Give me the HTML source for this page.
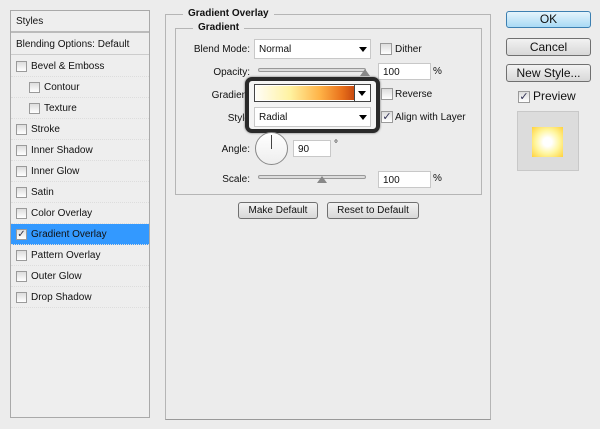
<!DOCTYPE html>
<html><head><style>
*{box-sizing:border-box}
body{margin:0;width:600px;height:429px;background:#ececec;font-family:"Liberation Sans",sans-serif;font-size:10px;color:#111;position:relative;overflow:hidden}
.a{position:absolute}
.lp{left:10px;top:10px;width:140px;height:408px;border:1px solid #a9a9a9;background:#eeeeee}
.row{position:absolute;left:0;width:138px;height:21px;border-bottom:1px dotted #ddd;line-height:21px;padding-left:20px}
.cb{position:absolute;width:11px;height:11px;border:1px solid #9a9a9a;background:linear-gradient(#ddd,#fff)}
.row .cb{left:5px;top:5px}
.sel{background:#3399ff}
.fs{border:1px solid #b5b5b5}
.inp{background:#fff;border:1px solid #c8c8c8;padding-left:4px;line-height:18px}
.btn{border:1px solid #707070;border-radius:3px;background:linear-gradient(#f2f2f2,#d8d8d8);text-align:center}
.tri{position:absolute;width:0;height:0;border-left:4px solid transparent;border-right:4px solid transparent;border-top:5px solid #000}
.lbl{position:absolute;text-align:right;width:80px}
.sl{position:absolute;height:4px;border:1px solid #999;border-radius:2px;background:#ddd}
</style></head><body>
<div class="a lp">
<div class="row" style="top:0;height:22px;padding-left:5px;border-bottom:2px solid #bbb">Styles</div>
<div class="row" style="top:23px;padding-left:5px;border-bottom:1px solid #ccc">Blending Options: Default</div>
<div class="row" style="top:45px"><span class="cb"></span>Bevel &amp; Emboss</div>
<div class="row" style="top:66px;padding-left:33px"><span class="cb" style="left:18px"></span>Contour</div>
<div class="row" style="top:87px;padding-left:33px"><span class="cb" style="left:18px"></span>Texture</div>
<div class="row" style="top:108px"><span class="cb"></span>Stroke</div>
<div class="row" style="top:129px"><span class="cb"></span>Inner Shadow</div>
<div class="row" style="top:150px"><span class="cb"></span>Inner Glow</div>
<div class="row" style="top:171px"><span class="cb"></span>Satin</div>
<div class="row" style="top:192px"><span class="cb"></span>Color Overlay</div>
<div class="row sel" style="top:213px"><span class="cb" style="font-size:10px;line-height:9px;text-align:center;color:#334">✓</span>Gradient Overlay</div>
<div class="row" style="top:234px"><span class="cb"></span>Pattern Overlay</div>
<div class="row" style="top:255px"><span class="cb"></span>Outer Glow</div>
<div class="row" style="top:276px"><span class="cb"></span>Drop Shadow</div>
</div>

<div class="a fs" style="left:165px;top:14px;width:326px;height:406px;border-bottom-color:#999"></div>
<div class="a" style="left:183px;top:8px;background:#ececec;padding:0 5px;font-weight:bold">Gradient Overlay</div>
<div class="a fs" style="left:175px;top:28px;width:307px;height:167px"></div>
<div class="a" style="left:193px;top:22px;background:#ececec;padding:0 5px;font-weight:bold">Gradient</div>

<div class="lbl" style="left:170px;top:44px">Blend Mode:</div>
<div class="a inp" style="left:254px;top:39px;width:117px;height:20px;line-height:19px">Normal</div>
<div class="tri" style="left:359px;top:47px"></div>
<div class="a cb" style="left:380px;top:43px;width:12px;height:12px"></div>
<div class="a" style="left:395px;top:44px">Dither</div>

<div class="lbl" style="left:170px;top:67px">Opacity:</div>
<div class="sl" style="left:258px;top:68px;width:108px"></div>
<div class="a" style="left:360px;top:69px;width:0;height:0;border-left:5px solid transparent;border-right:5px solid transparent;border-bottom:7px solid #888"></div>
<div class="a inp" style="left:378px;top:63px;width:53px;height:17px;line-height:17px">100</div>
<div class="a" style="left:433px;top:66px">%</div>

<div class="lbl" style="left:170px;top:90px">Gradient</div>
<div class="lbl" style="left:170px;top:113px">Style</div>
<div class="a" style="left:245px;top:77px;width:135px;height:56px;border:4px solid #2a2a2a;border-radius:7px;background:#f4f4f4;box-shadow:0 0 2px #666"></div>
<div class="a" style="left:254px;top:84px;width:117px;height:18px;border:1px solid #444;background:#fff"></div>
<div class="a" style="left:256px;top:86px;width:98px;height:14px;background:linear-gradient(90deg,#fffdf6,#fff2a0 35%,#ffb347 65%,#e8701a 88%,#c84a10)"></div>
<div class="a" style="left:354px;top:85px;width:1px;height:16px;background:#444"></div>
<div class="tri" style="left:358px;top:91px"></div>
<div class="a inp" style="left:254px;top:107px;width:117px;height:20px;line-height:20px">Radial</div>
<div class="tri" style="left:359px;top:115px"></div>

<div class="a cb" style="left:381px;top:88px;width:12px;height:12px"></div>
<div class="a" style="left:395px;top:89px">Reverse</div>
<div class="a cb" style="left:381px;top:111px;width:12px;height:12px;font-size:11px;line-height:10px;text-align:center;color:#335">✓</div>
<div class="a" style="left:395px;top:112px">Align with Layer</div>

<div class="lbl" style="left:170px;top:144px">Angle:</div>
<div class="a" style="left:255px;top:132px;width:33px;height:33px;border:1px solid #888;border-radius:50%;background:linear-gradient(#fff,#eee)"></div>
<div class="a" style="left:271px;top:135px;width:1px;height:14px;background:#444"></div>
<div class="a inp" style="left:293px;top:140px;width:38px;height:17px;line-height:17px">90</div>
<div class="a" style="left:334px;top:139px">°</div>

<div class="lbl" style="left:170px;top:174px">Scale:</div>
<div class="sl" style="left:258px;top:175px;width:108px"></div>
<div class="a" style="left:317px;top:176px;width:0;height:0;border-left:5px solid transparent;border-right:5px solid transparent;border-bottom:7px solid #888"></div>
<div class="a inp" style="left:378px;top:171px;width:53px;height:17px;line-height:17px">100</div>
<div class="a" style="left:433px;top:173px">%</div>

<div class="a btn" style="left:238px;top:202px;width:80px;height:17px;line-height:15px">Make Default</div>
<div class="a btn" style="left:327px;top:202px;width:92px;height:17px;line-height:15px">Reset to Default</div>

<div class="a btn" style="left:506px;top:11px;width:85px;height:17px;line-height:15px;font-size:12px;border-color:#3c7fb1;background:linear-gradient(#e5f4fc,#a9daf5)">OK</div>
<div class="a btn" style="left:506px;top:38px;width:85px;height:18px;line-height:16px;font-size:12px">Cancel</div>
<div class="a btn" style="left:506px;top:64px;width:85px;height:18px;line-height:16px;font-size:12px">New Style...</div>
<div class="a cb" style="left:518px;top:91px;width:12px;height:12px;font-size:11px;line-height:10px;text-align:center;color:#335">✓</div>
<div class="a" style="left:533px;top:89px;font-size:12px">Preview</div>
<div class="a" style="left:517px;top:111px;width:62px;height:60px;border:1px solid #c8c8c8;background:#dcdcdc"></div>
<div class="a" style="left:532px;top:127px;width:31px;height:30px;background:radial-gradient(circle,#fff 20%,#fff6a0 55%,#ffd23c 100%)"></div>
</body></html>
